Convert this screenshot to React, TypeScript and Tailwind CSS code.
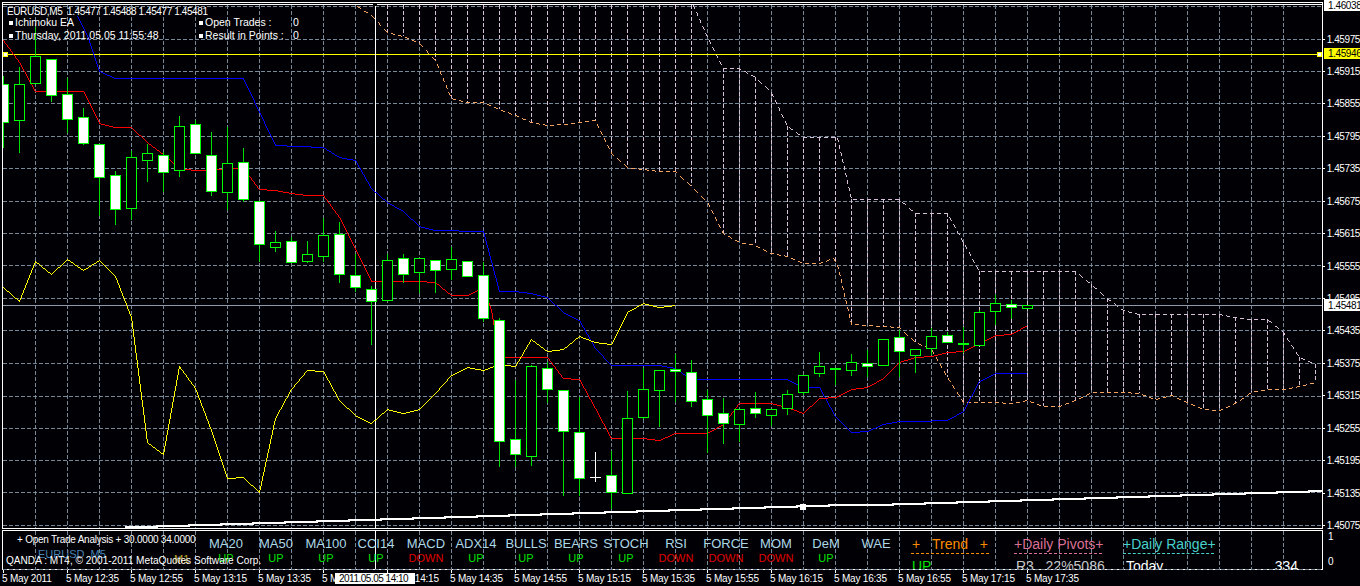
import React from "react";

type Candle = [number, number, number, number, number, number]; // x, high, bodyTop, bodyBottom, low, kind (0 hollow, 1 white, 2 flat)

const candles: Candle[] = [
  [3, 76, 84, 122, 148, 1], [19, 67, 84, 120, 153, 0], [35, 27, 56, 83, 83, 0], [51, 59, 59, 95, 102, 1],
  [67, 78, 94, 119, 133, 1], [83, 108, 117, 143, 145, 1], [99, 144, 144, 177, 216, 1], [115, 171, 175, 209, 225, 1],
  [131, 151, 157, 208, 220, 0], [147, 144, 153, 160, 182, 0], [163, 152, 155, 172, 192, 1], [179, 116, 126, 170, 177, 0],
  [195, 120, 124, 153, 153, 1], [211, 132, 155, 191, 196, 1], [227, 127, 163, 192, 210, 0], [243, 148, 162, 199, 202, 1],
  [259, 201, 201, 244, 262, 1], [275, 231, 242, 247, 252, 0], [291, 237, 241, 262, 263, 1], [307, 241, 254, 261, 263, 0],
  [323, 218, 235, 256, 262, 0], [339, 222, 234, 274, 283, 1], [355, 254, 275, 287, 292, 1], [371, 286, 289, 301, 345, 1],
  [387, 254, 260, 300, 300, 0], [403, 254, 258, 274, 283, 1], [419, 258, 258, 272, 293, 0], [435, 260, 260, 270, 293, 1],
  [451, 247, 259, 269, 280, 0], [467, 261, 261, 276, 276, 1], [483, 262, 275, 318, 322, 1], [499, 318, 320, 441, 467, 1],
  [515, 380, 439, 454, 467, 1], [531, 365, 366, 456, 466, 0], [547, 362, 368, 389, 403, 1], [563, 390, 390, 431, 496, 1],
  [579, 397, 432, 478, 496, 1], [611, 451, 475, 492, 509, 1], [627, 391, 418, 493, 493, 0], [643, 368, 389, 417, 419, 0],
  [659, 370, 370, 390, 427, 0], [675, 354, 369, 371, 402, 1], [691, 360, 372, 401, 407, 1], [707, 390, 399, 415, 453, 1],
  [723, 398, 413, 423, 444, 1], [739, 409, 409, 424, 442, 0], [755, 392, 408, 413, 418, 1], [771, 409, 409, 415, 426, 0],
  [787, 390, 394, 408, 415, 0], [803, 375, 375, 392, 395, 0], [819, 352, 366, 373, 377, 0], [835, 369, 368, 369, 385, 2],
  [851, 354, 362, 370, 376, 0], [867, 350, 363, 366, 377, 1], [883, 339, 339, 365, 365, 0], [899, 330, 337, 351, 377, 1],
  [915, 349, 349, 355, 373, 0], [931, 328, 336, 348, 355, 0], [947, 332, 335, 342, 342, 1], [963, 327, 343, 344, 353, 2],
  [979, 310, 312, 345, 345, 0], [995, 295, 303, 311, 325, 0], [1011, 300, 304, 307, 319, 1], [1027, 305, 305, 308, 308, 0],
];

const yellowLine = [
  [3, 287], [19, 301], [35, 261], [51, 274], [67, 259], [83, 270], [99, 260], [115, 276], [131, 317], [147, 442], [163, 454],
  [179, 366], [195, 388], [211, 430], [227, 478], [243, 477], [259, 492], [275, 418], [291, 389], [307, 370], [323, 371],
  [339, 400], [355, 415], [371, 423], [387, 409], [403, 413], [419, 409], [435, 393], [451, 375], [467, 367], [483, 370],
  [499, 364], [515, 366], [531, 339], [547, 351], [563, 349], [579, 336], [595, 342], [611, 344], [627, 312], [643, 303],
  [659, 307], [675, 305],
];

const redLine = [
  [3, 40], [19, 62], [35, 91], [83, 91], [99, 123], [115, 127], [131, 127], [147, 142], [163, 154], [179, 168], [195, 170],
  [211, 170], [227, 168], [243, 168], [259, 189], [275, 190], [291, 193], [307, 195], [323, 195], [339, 217], [355, 248],
  [371, 281], [419, 281], [435, 282], [451, 295], [467, 295], [483, 287], [491, 310], [499, 357], [547, 357], [563, 378],
  [579, 379], [595, 408], [611, 438], [643, 438], [659, 440], [675, 433], [707, 433], [723, 424], [739, 403], [771, 403],
  [787, 407], [803, 413], [819, 398], [835, 397], [851, 389], [867, 387], [883, 378], [899, 362], [915, 357], [931, 356],
  [947, 352], [963, 351], [979, 343], [995, 335], [1011, 334], [1027, 325],
];

const blueLine = [
  [77, 16], [88, 38], [99, 71], [115, 78], [243, 78], [275, 145], [323, 147], [339, 157], [355, 160], [371, 188], [387, 202],
  [403, 211], [419, 226], [435, 230], [483, 231], [499, 291], [515, 291], [531, 293], [547, 297], [563, 312], [579, 320],
  [595, 348], [611, 365], [659, 365], [675, 368], [691, 379], [787, 379], [803, 387], [819, 387], [835, 416], [851, 432],
  [867, 431], [883, 424], [899, 421], [915, 421], [947, 420], [963, 411], [979, 381], [995, 373], [1027, 373],
];

const sandyLine = [
  [357, 6], [371, 15], [387, 32], [403, 36], [419, 43], [435, 60], [451, 98], [467, 102], [483, 102], [499, 109], [515, 115],
  [531, 122], [547, 125], [563, 124], [579, 122], [595, 120], [611, 153], [627, 167], [643, 169], [659, 171], [675, 171],
  [691, 186], [707, 202], [723, 233], [739, 242], [755, 245], [771, 253], [787, 256], [803, 263], [819, 263], [833, 258],
  [837, 264], [851, 324], [867, 325], [883, 326], [899, 327], [915, 342], [931, 349], [947, 377], [963, 402], [979, 402],
  [995, 402], [1011, 403], [1027, 400], [1043, 406], [1059, 406], [1075, 400], [1091, 392], [1107, 392], [1123, 392],
  [1139, 393], [1155, 399], [1171, 395], [1187, 402], [1203, 409], [1219, 410], [1235, 403], [1251, 392], [1267, 389],
  [1283, 389], [1299, 386], [1315, 382],
];

const thistleLine = [
  [693, 5], [707, 37], [723, 68], [739, 68], [755, 77], [771, 92], [787, 126], [803, 137], [837, 137], [851, 199], [899, 199],
  [915, 213], [947, 213], [963, 242], [979, 271], [1075, 271], [1091, 284], [1107, 298], [1123, 310], [1139, 314],
  [1219, 314], [1235, 317], [1251, 319], [1267, 319], [1283, 332], [1299, 357], [1315, 364],
];

const gridXs = Array.from({ length: 40 }, (_, i) => 35 + i * 32).filter((x) => x < 1322);
const gridYs = [6, 39, 71, 103, 136, 168, 201, 233, 265, 298, 330, 363, 396, 428, 460, 492, 525];

const priceLabels = [
  "1.45975", "1.45915", "1.45855", "1.45795", "1.45735", "1.45675", "1.45615", "1.45555", "1.45495", "1.45435",
  "1.45375", "1.45315", "1.45255", "1.45195", "1.45135", "1.45075",
];

const timeLabels = [
  "5 May 2011", "5 May 12:35", "5 May 12:55", "5 May 13:15", "5 May 13:35", "5 May 13:55", "5 May 14:15", "5 May 14:35",
  "5 May 14:55", "5 May 15:15", "5 May 15:35", "5 May 15:55", "5 May 16:15", "5 May 16:35", "5 May 16:55", "5 May 17:15",
  "5 May 17:35",
];

const indicators = [
  ["MA20", "UP"], ["MA50", "UP"], ["MA100", "UP"], ["CCI14", "UP"], ["MACD", "DOWN"], ["ADX14", "UP"], ["BULLS", "UP"],
  ["BEARS", "UP"], ["STOCH", "UP"], ["RSI", "DOWN"], ["FORCE", "DOWN"], ["MOM", "DOWN"], ["DeM", "UP"], ["WAE", ""],
];

// aliased one pixel line, the way the terminal draws its indicators
const pixelPath = (line: number[][], on = 0, off = 0) => {
  let d = "";
  let n = 0;
  for (let i = 1; i < line.length; i++) {
    const [x0, y0] = line[i - 1];
    const [x1, y1] = line[i];
    const steps = Math.max(Math.abs(x1 - x0), Math.abs(y1 - y0));
    for (let s = 0; s < steps; s++) {
      if (!off || n % (on + off) < on) {
        d += `M${Math.round(x0 + ((x1 - x0) * s) / steps)} ${Math.round(y0 + ((y1 - y0) * s) / steps)}h1v1h-1z`;
      }
      n++;
    }
  }
  return d;
};

// value of a polyline at x, used for the cloud hatching
const valueAt = (line: number[][], x: number) => {
  if (x <= line[0][0]) return line[0][1];
  for (let i = 1; i < line.length; i++) {
    if (x <= line[i][0]) {
      const [x0, y0] = line[i - 1];
      const [x1, y1] = line[i];
      return Math.round(y0 + ((y1 - y0) * (x - x0)) / (x1 - x0));
    }
  }
  return line[line.length - 1][1];
};

const hatchXs = Array.from({ length: 59 }, (_, i) => 387 + i * 16).filter((x) => x !== 707);

const maSteps = () => {
  const pts: number[][] = [];
  for (let x = 125; x < 1322; x += 32) {
    const y = Math.round(526.9 - 0.0304 * (x - 125));
    pts.push([x, y], [Math.min(x + 32, 1322), y]);
  }
  return pts;
};

const Grid = ({ top, bottom }: { top: number; bottom: number }) => (
  <g stroke="#778899" strokeDasharray="4 2">
    {gridXs.map((x) => (
      <line key={x} x1={x + 0.5} y1={top} x2={x + 0.5} y2={bottom} />
    ))}
  </g>
);

const MainChart = () => (
  <svg className="absolute inset-0" width={1319} height={525} viewBox="3 3 1319 525" shapeRendering="crispEdges" fill="none">
    <Grid top={5} bottom={528} />
    <g stroke="#778899" strokeDasharray="4 2">
      {gridYs.map((y) => (
        <line key={y} x1={3} y1={y + 0.5} x2={1322} y2={y + 0.5} />
      ))}
    </g>
    <line x1={3} y1={4.5} x2={1322} y2={4.5} stroke="#ffffff" />
    {/* cloud hatching */}
    <g stroke="#d8bfd8" strokeDasharray="4 2">
      {hatchXs.map((x) => (
        <line key={x} x1={x + 0.5} y1={x < 693 ? 5 : valueAt(thistleLine, x)} x2={x + 0.5} y2={valueAt(sandyLine, x)} />
      ))}
    </g>
    <path d={pixelPath(sandyLine, 4, 3)} fill="#f4a460" />
    <path d={pixelPath(thistleLine, 4, 3)} fill="#d8bfd8" />
    <polyline points={maSteps().map(([x, y]) => `${x},${y}`).join(" ")} stroke="#ffffff" strokeWidth={2} />
    <rect x={800} y={504} width={6} height={6} fill="#ffffff" />
    <line x1={3} y1={305.5} x2={1322} y2={305.5} stroke="#8f9bab" />
    <line x1={3} y1={54.5} x2={1322} y2={54.5} stroke="#ffff00" />
    <rect x={3.5} y={52.5} width={4} height={4} fill="#ffffff" stroke="#ffff00" />
    <rect x={1317.5} y={52.5} width={4} height={4} fill="#ffffff" stroke="#ffff00" />
    <line x1={375.5} y1={4} x2={375.5} y2={528} stroke="#ffffff" />
    <rect x={373} y={4} width={4} height={2} fill="#000000" />
    <path d={pixelPath(blueLine)} fill="#0000ff" />
    <path d={pixelPath(redLine)} fill="#ff0000" />
    <path d={pixelPath(yellowLine)} fill="#ffff00" />
    {/* doji drawn in white */}
    <line x1={595.5} y1={452} x2={595.5} y2={482} stroke="#ffffff" />
    <line x1={590} y1={477.5} x2={601} y2={477.5} stroke="#ffffff" />
    {candles.map(([x, high, top, bottom, low, kind]) => (
      <g key={x}>
        <line x1={x + 0.5} y1={high} x2={x + 0.5} y2={low} stroke="#00dd00" />
        {kind === 2 ? (
          <rect x={x - 5} y={top} width={11} height={2} fill="#00ff00" />
        ) : (
          <rect x={x - 4.5} y={top + 0.5} width={10} height={bottom - top} fill={kind === 1 ? "#ffffff" : "#000005"} stroke="#00ff00" />
        )}
      </g>
    ))}
  </svg>
);

const SubChart = () => (
  <svg className="absolute inset-0 overflow-visible" width={1319} height={38} viewBox="3 531 1319 38" shapeRendering="crispEdges" fill="none">
    <Grid top={531} bottom={570} />
    <line x1={3} y1={569.5} x2={1322} y2={569.5} stroke="#778899" strokeDasharray="4 2" />
    <line x1={375.5} y1={531} x2={375.5} y2={569} stroke="#ffffff" />
  </svg>
);

const InfoRow = ({ text, value }: { text: string; value?: string }) => (
  <div className="flex h-[13px] items-center gap-[2px] whitespace-pre">
    <span className="h-[4px] w-[4px] bg-white" />
    <span>{text}</span>
    {value && <span className="ml-auto w-[10px]">{value}</span>}
  </div>
);

const Tag = ({ className, children }: { className: string; children: React.ReactNode }) => (
  <span className={`absolute left-[1px] flex w-[36px] items-center pl-[4px] text-black ${className}`}>{children}</span>
);

export default function App() {
  return (
    <div className="flex h-[586px] w-[1360px] flex-col overflow-hidden bg-[#000005] pt-[2px] font-['Liberation_Sans',Arial,sans-serif] text-[10px] text-white">
      {/* main chart window + price scale */}
      <div className="flex h-[527px] pl-[2px]">
        <div className="relative h-full w-[1321px] border border-white">
          <MainChart />
          <div className="relative flex flex-col pl-[4px] pt-[3px]">
            <div className="h-[10px] whitespace-pre leading-[11px] tracking-[-0.4px]">{"EURUSD,M5  1.45477 1.45488 1.45477 1.45481"}</div>
            <div className="grid w-[296px] grid-cols-[190px_104px] pl-[2px] text-[10.5px]">
              <InfoRow text="Ichimoku EA" />
              <InfoRow text="Open Trades :" value="0" />
              <InfoRow text="Thursday, 2011.05.05 11:55:48" />
              <InfoRow text="Result in Points :" value="0" />
            </div>
          </div>
        </div>
        <div className="relative flex w-[37px] flex-col pt-[20.8px] tracking-[-0.4px]">
          {priceLabels.map((label) => (
            <div key={label} className="flex h-[32.44px] shrink-0 items-center gap-[2px] whitespace-pre">
              <span className="h-px w-[3px] bg-white" />
              <span>{label}</span>
            </div>
          ))}
          <Tag className="top-[-2px] h-[11px] bg-white">1.46038</Tag>
          <Tag className="top-[46px] h-[11px] bg-[#ffff00]">1.45946</Tag>
          <Tag className="top-[297px] h-[12px] bg-white">1.45481</Tag>
        </div>
      </div>

      {/* indicator window + its scale */}
      <div className="mt-[1px] flex h-[40px] pl-[2px]">
        <div className="relative h-full w-[1321px] border border-white">
          <SubChart />
          <div className="relative flex h-full overflow-hidden">
            <div className="grid w-[198px] shrink-0 whitespace-pre">
              <div className="[grid-area:1/1] pl-[35px] pt-[17px] text-[11px] leading-[13px] text-[#4682b4]">EURUSD  M5</div>
              <div className="[grid-area:1/1] pl-[171px] pt-[22px] text-[11px] leading-[13px] text-[#b8a030]">M1</div>
              <div className="[grid-area:1/1] pl-[14px] pt-[3px] leading-[12px] tracking-[-0.23px]">+ Open Trade Analysis + 30.0000 34.0000</div>
            </div>
            {indicators.map(([name, state]) => (
              <div key={name} className="flex w-[50px] shrink-0 flex-col items-center pt-[5px]">
                <span className="text-[13px] leading-[16px] text-[#add8e6]">{name}</span>
                <span className={`text-[11px] leading-[13px] ${state === "UP" ? "text-[#00e000]" : "text-[#e00000]"}`}>{state}</span>
              </div>
            ))}
            <div className="ml-[10px] flex w-[78px] shrink-0 flex-col pt-[5px] text-[14px] leading-[16px] text-[#ff8c00]">
              <div className="flex justify-between px-[1px]">
                <span>+</span>
                <span>Trend</span>
                <span>+</span>
              </div>
              <div className="mt-[1px] border-t border-dashed border-[#ff8c00]" />
              <div className="mt-[4px] pl-[1px] text-[#00e000]">UP</div>
            </div>
            <div className="ml-[25px] flex w-[88px] shrink-0 flex-col whitespace-pre pt-[5px] text-[14px] leading-[16px] text-[#db7093]">
              <div>+Daily Pivots+</div>
              <div className="mt-[1px] border-t border-dashed border-[#db7093]" />
              <div className="mt-[4px] pl-[2px] text-[#c8c8c8]">R3   22%5086</div>
            </div>
            <div className="ml-[21px] flex w-[175px] shrink-0 flex-col pt-[5px] text-[14px] leading-[16px] text-[#48d1cc]">
              <div className="whitespace-pre">+Daily Range+</div>
              <div className="mt-[1px] w-[91px] border-t border-dashed border-[#48d1cc]" />
              <div className="mt-[4px] flex justify-between pl-[3px] text-white">
                <span>Today</span>
                <span>334</span>
              </div>
            </div>
            {/* the copyright line sits on top of everything else in the window */}
            <div className="absolute left-[3px] top-[23px] whitespace-pre text-[10.1px] leading-[13px]">QANDA : MT4, © 2001-2011 MetaQuotes Software Corp.</div>
          </div>
        </div>
        <div className="flex w-[37px] flex-col gap-[11px] pl-[5px]">
          <span className="h-[14px] leading-[14px]">1</span>
          <span className="h-[14px] leading-[14px]">0</span>
        </div>
      </div>

      {/* time axis */}
      <div className="relative flex h-[16px] pl-[2px] tracking-[-0.2px]">
        {timeLabels.map((label) => (
          <div key={label} className="flex w-[64px] shrink-0 flex-col whitespace-pre">
            <span className="ml-[1px] h-[3px] w-px bg-white" />
            <span className="leading-[11px]">{label}</span>
          </div>
        ))}
        <span className="absolute left-[335px] top-[3px] flex h-[11px] w-[80px] items-center whitespace-pre bg-white pl-[4px] tracking-[-0.5px] text-black">2011.05.05 14:10</span>
      </div>
    </div>
  );
}
